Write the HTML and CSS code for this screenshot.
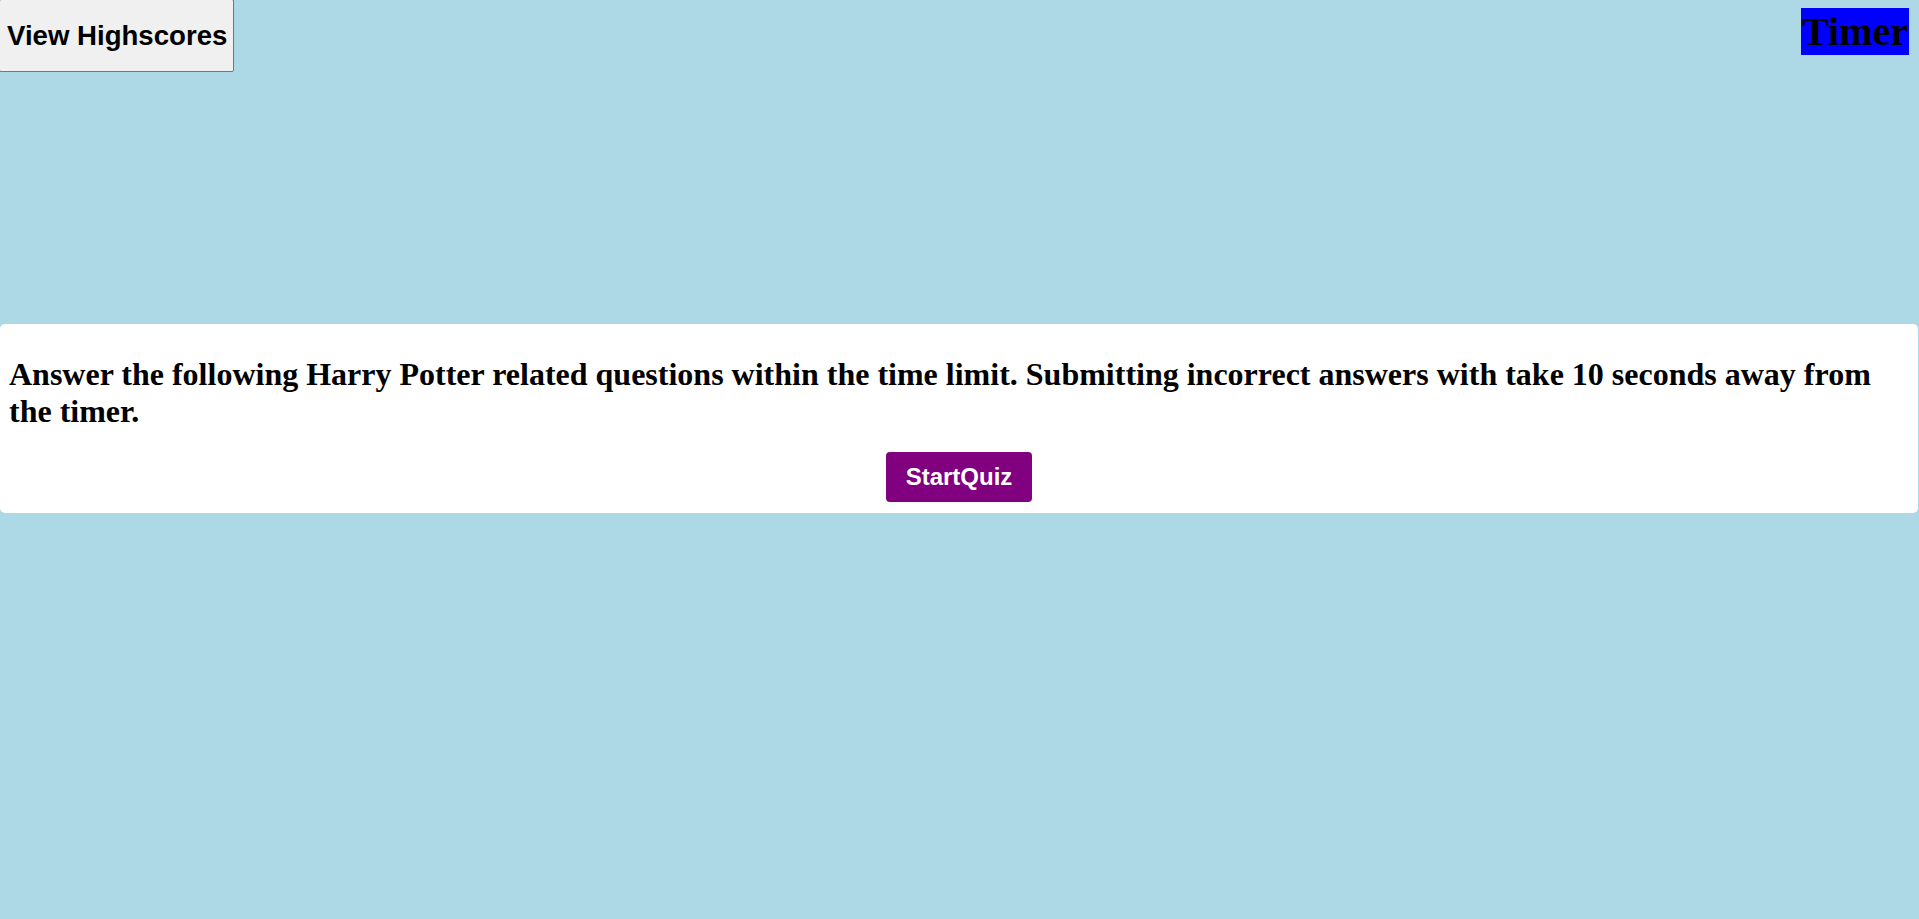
FILE: index.html
```html
<!DOCTYPE html>
<html lang="en">
<head>
<meta charset="utf-8">
<title>Harry Potter Quiz</title>
<link rel="stylesheet" href="styles.css">
</head>
<body>
<header class="topbar">
  <button class="highscores-btn" type="button">View Highscores</button>
  <div class="timer">Timer</div>
</header>
<main class="stage">
  <section class="intro-card">
    <h1 class="intro-text">Answer the following Harry Potter related questions within the time limit. Submitting incorrect answers with take 10 seconds away from the timer.</h1>
    <div class="start-row">
      <button class="start-btn" type="button">StartQuiz</button>
    </div>
  </section>
</main>
</body>
</html>
```
FILE: styles.css
```css
html, body {
  margin: 0;
  padding: 0;
}
body {
  background: #add8e6;
  height: 919px;
  overflow: hidden;
  font-family: "Liberation Serif", "Times New Roman", serif;
}
.topbar {
  display: flex;
  justify-content: space-between;
  align-items: flex-start;
}
.highscores-btn {
  margin: -1px 0 0 -1px;
  width: 235px;
  height: 73px;
  padding: 0 0 0 7px;
  text-align: left;
  background: #f0f0f0;
  border: 1px solid #767676;
  border-radius: 2px;
  font-family: "Liberation Sans", Arial, sans-serif;
  font-weight: bold;
  font-size: 27.6px;
  color: #000;
}
.timer {
  margin: 8px 10px 0 0;
  background: #0000ff;
  color: #000;
  font-weight: bold;
  font-size: 40px;
  line-height: 47px;
  padding: 0 1px;
}
.stage {
  padding-top: 252px;
}
.intro-card {
  margin-right: 1px;
  background: #ffffff;
  border-radius: 5px;
  padding: 32px 9px 11px 9px;
}
.intro-text {
  margin: 0;
  font-size: 32px;
  font-weight: bold;
  line-height: 37px;
  color: #000;
}
.start-row {
  display: flex;
  justify-content: center;
  margin-top: 22px;
}
.start-btn {
  width: 146px;
  height: 50px;
  padding: 0;
  background: #800080;
  color: #ffffff;
  border: none;
  border-radius: 4px;
  font-family: "Liberation Sans", Arial, sans-serif;
  font-weight: bold;
  font-size: 24px;
}
```
